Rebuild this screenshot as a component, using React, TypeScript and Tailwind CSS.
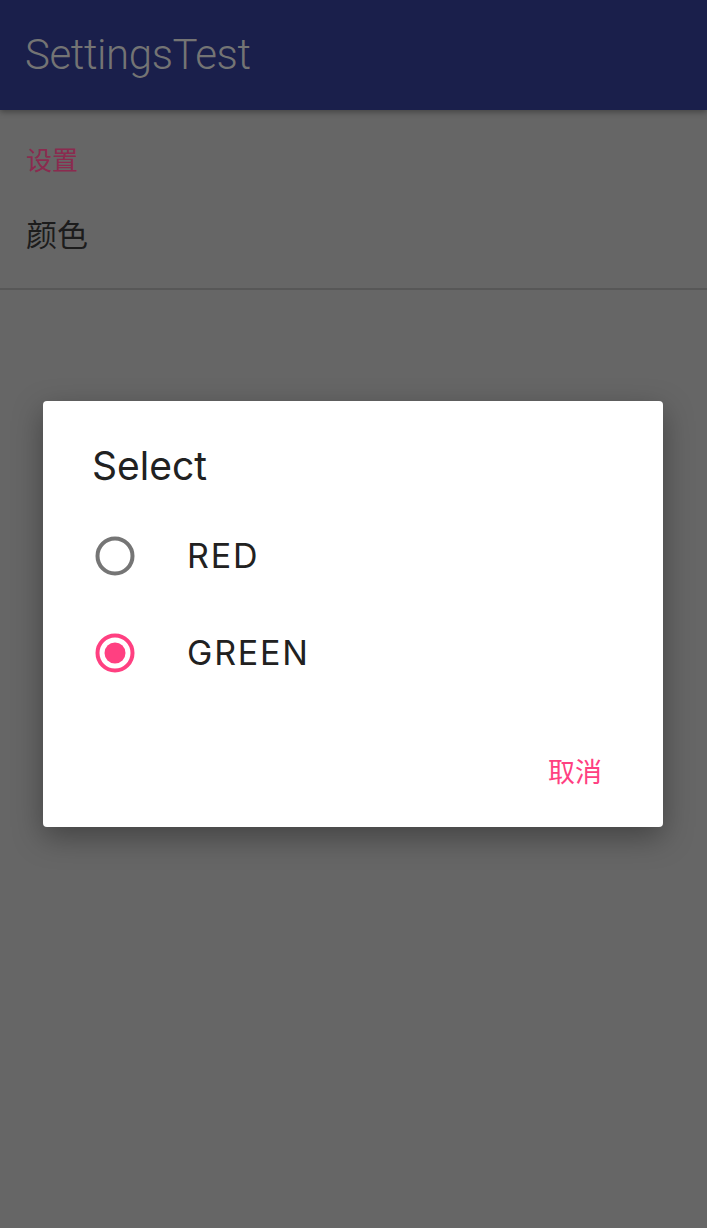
import React from "react";

const roboto = { fontFamily: "Roboto, 'Noto Sans CJK SC', sans-serif" };
const inter = { fontFamily: "Inter, 'Noto Sans CJK SC', sans-serif" };

function Radio({ checked }: { checked: boolean }) {
  return (
    <svg width="40" height="40" viewBox="0 0 40 40" className="shrink-0">
      <circle
        cx="20"
        cy="20"
        r="17.5"
        fill="none"
        stroke={checked ? "#ff4081" : "#757575"}
        strokeWidth="4"
      />
      {checked && <circle cx="20" cy="20" r="10.5" fill="#ff4081" />}
    </svg>
  );
}

export default function App() {
  const options = [
    { label: "RED", checked: false },
    { label: "GREEN", checked: true },
  ];

  return (
    <div className="relative h-[1228px] w-full overflow-hidden bg-[#666666]" style={roboto}>
      {/* app bar */}
      <header className="flex h-[110px] items-center bg-[#1a1f4b] pl-[25px] shadow-[0_2px_6px_rgba(0,0,0,0.35)]">
        <h1 className="text-[42px] font-light leading-none tracking-[-0.4px] text-[#747474]">SettingsTest</h1>
      </header>

      {/* preference list */}
      <section className="px-[26px] pt-[38px]">
        <div className="text-[26px] leading-none text-[#8b2b4f]">设置</div>
        <div className="mt-[46px] pb-[37px] text-[31px] leading-none text-[#1c1c1c]">颜色</div>
      </section>
      <div className="h-[2px] bg-[#575757]" />

      {/* dialog */}
      <div className="absolute inset-0 pl-[43px] pr-[44px] pt-[401px]" style={inter}>
        <div className="flex h-[426px] flex-col rounded-[4px] bg-white shadow-[0_10px_30px_rgba(0,0,0,0.35)]">
          <div className="pl-[49px] pt-[45px] text-[39px] leading-none text-[#212121]">Select</div>
          <div className="mt-[22px] flex flex-col">
            {options.map((o) => (
              <div key={o.label} className="flex h-[97px] items-center pl-[52px]">
                <Radio checked={o.checked} />
                <span className="ml-[52px] text-[34px] leading-none tracking-[1.8px] text-[#212121]">{o.label}</span>
              </div>
            ))}
          </div>
          <div className="mt-auto flex justify-end pb-[41px] pr-[61px]">
            <span className="text-[27px] leading-none text-[#ff4081]">取消</span>
          </div>
        </div>
      </div>
    </div>
  );
}
